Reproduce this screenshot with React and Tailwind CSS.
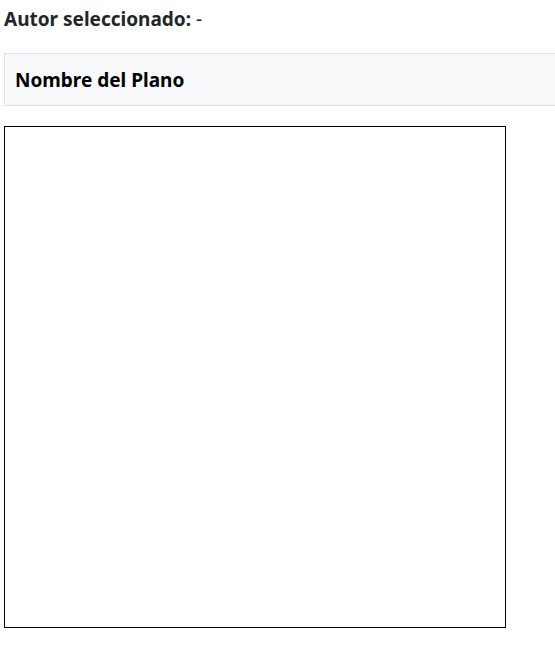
export default function App() {
  return (
    <div className="min-h-[652px] bg-white pl-1 pt-[6px] font-['Noto_Sans',sans-serif] overflow-hidden">
      <div className="text-[19px] leading-[27px] text-[#212529]">
        <span className="font-bold">Autor seleccionado:</span> -
      </div>
      <div className="mt-[20px] w-[600px] h-[53px] border border-[#dee2e6] bg-[#f8f9fa] flex items-center px-[10px] pt-[2px]">
        <span className="text-[19px] font-bold text-black">Nombre del Plano</span>
      </div>
      <div className="mt-[20px] w-[502px] h-[502px] border border-black bg-white"></div>
    </div>
  );
}
